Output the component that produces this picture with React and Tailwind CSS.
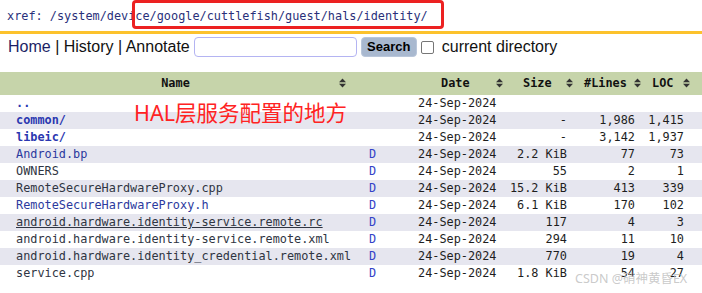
import React from 'react'

const mono = { fontFamily: '"DejaVu Sans Mono", "Liberation Mono", monospace' }

const SortIcon = () => (
  <svg width="7" height="10" viewBox="0 0 7 10" className="shrink-0">
    <path d="M0 4.2 L3.5 0.5 L7 4.2Z" fill="#333" />
    <path d="M0 5.8 L3.5 9.5 L7 5.8Z" fill="#333" />
  </svg>
)

const date = '24-Sep-2024'

const rows = [
  { name: '..', d: '', size: '', lines: '', loc: '', tone: 'dir' },
  { name: 'common/', d: '', size: '-', lines: '1,986', loc: '1,415', tone: 'dir' },
  { name: 'libeic/', d: '', size: '-', lines: '3,142', loc: '1,937', tone: 'dir' },
  { name: 'Android.bp', d: 'D', size: '2.2 KiB', lines: '77', loc: '73', tone: 'link' },
  { name: 'OWNERS', d: 'D', size: '55', lines: '2', loc: '1', tone: 'seen' },
  { name: 'RemoteSecureHardwareProxy.cpp', d: 'D', size: '15.2 KiB', lines: '413', loc: '339', tone: 'seen' },
  { name: 'RemoteSecureHardwareProxy.h', d: 'D', size: '6.1 KiB', lines: '170', loc: '102', tone: 'link' },
  { name: 'android.hardware.identity-service.remote.rc', d: 'D', size: '117', lines: '4', loc: '3', tone: 'hover' },
  { name: 'android.hardware.identity-service.remote.xml', d: 'D', size: '294', lines: '11', loc: '10', tone: 'seen' },
  { name: 'android.hardware.identity_credential.remote.xml', d: 'D', size: '770', lines: '19', loc: '4', tone: 'seen' },
  { name: 'service.cpp', d: 'D', size: '1.8 KiB', lines: '54', loc: '27', tone: 'seen' },
]

const nameClass = {
  dir: 'text-[#2a37b0] font-bold',
  link: 'text-[#2c3a9e]',
  seen: 'text-[#2f3542]',
  hover: 'text-[#2f3542] underline',
}

const cols = 'grid grid-cols-[360px_50px_98px_68px_70px_56px]'

export default function App() {
  return (
    <div className="relative w-[702px] h-[293px] bg-white overflow-hidden">
      <div className="h-[31px] pt-[8px] pl-[7px] text-[11.85px] leading-[16px] text-[#29307a]" style={mono}>
        xref: /system/device/google/cuttlefish/guest/hals/identity/
      </div>
      <div className="h-[3px] bg-[#fcc22c]" />

      <div
        className="mt-[3px] h-[20px] pl-[8px] flex items-center text-[16px] text-[#111]"
        style={{ fontFamily: '"Liberation Sans", Arial, sans-serif' }}
      >
        <span className="text-[#1c1f66]">Home</span>
        <span className="whitespace-pre"> | History | Annotate</span>
        <span className="ml-[4px] w-[163px] h-[20px] border border-[#b4b4f2] rounded-[4px] bg-white" />
        <span className="ml-[4px] w-[56px] h-[20px] rounded-[4px] bg-[#a8b8cf] border border-[#b9c6da] flex items-center justify-center text-[13px] font-bold text-black">
          Search
        </span>
        <span className="ml-[4px] w-[13px] h-[13px] border border-[#767676] rounded-[2px] bg-white" />
        <span className="ml-[8px]">current directory</span>
      </div>

      <div className="mt-[15px] text-[11.85px]" style={mono}>
        <div className={`${cols} h-[23px] bg-[#c6d4aa] font-bold text-[#111] items-center`}>
          <div className="flex items-center pl-[12px] pr-[14px]">
            <span className="flex-1 text-center">Name</span>
            <SortIcon />
          </div>
          <div />
          <div className="flex items-center justify-between pl-[31px] pr-[5px]">
            <span>Date</span>
            <SortIcon />
          </div>
          <div className="flex items-center justify-between pl-[15px] pr-[3px]">
            <span>Size</span>
            <SortIcon />
          </div>
          <div className="flex items-center justify-between pl-[8px] pr-[5px]">
            <span>#Lines</span>
            <SortIcon />
          </div>
          <div className="flex items-center justify-between pl-[6px] pr-[12px]">
            <span>LOC</span>
            <SortIcon />
          </div>
        </div>

        {rows.map((r, i) => (
          <div
            key={r.name}
            className={`${cols} h-[17px] leading-[17px] whitespace-pre ${i % 2 === 1 ? 'bg-[#e6e6ef]' : 'bg-white'}`}
          >
            <div className={`pl-[16px] ${nameClass[r.tone]}`}>{r.name}</div>
            <div className="pl-[9px] text-[#3342c8]">{r.d}</div>
            <div className="pl-[8px] text-[#1e1e1e]">{date}</div>
            <div className="pr-[9px] text-right text-[#1e1e1e]">{r.size}</div>
            <div className="pr-[11px] text-right text-[#1e1e1e]">{r.lines}</div>
            <div className="pr-[18px] text-right text-[#1e1e1e]">{r.loc}</div>
          </div>
        ))}
      </div>

      <div className="absolute left-[132px] top-0 w-[312px] h-[29px] border-[3px] border-[#ec2121] rounded-[4px]" />

      <div
        className="absolute left-[134px] top-[102px] text-[21.5px] leading-[22px] text-[#ff2323] whitespace-nowrap"
        style={{ fontFamily: '"Noto Sans", "Noto Sans CJK SC", sans-serif' }}
      >
        HAL层服务配置的地方
      </div>

      <div
        className="absolute left-[575px] top-[271px] text-[12.5px] leading-[16px] text-[#c4c4c4]/90 whitespace-nowrap"
        style={{ fontFamily: '"Noto Sans", "Noto Sans CJK SC", sans-serif' }}
      >
        CSDN @硝神黄昏EX
      </div>
    </div>
  )
}
